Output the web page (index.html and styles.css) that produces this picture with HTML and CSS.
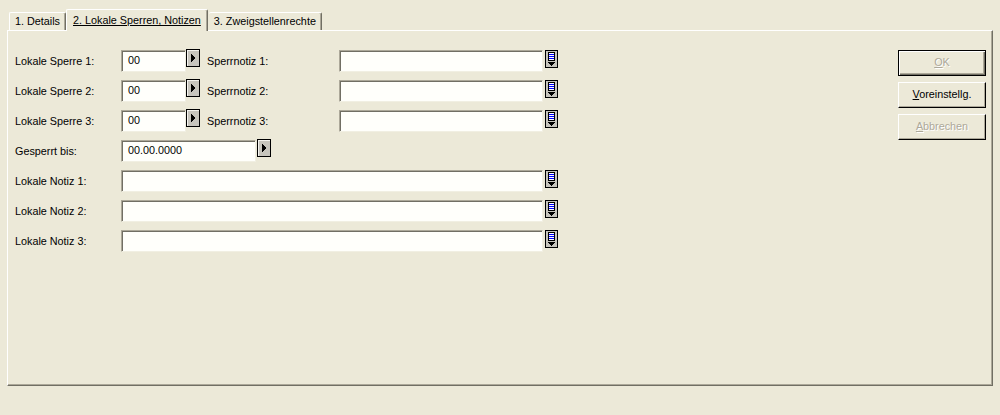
FILE: index.html
```html
<!DOCTYPE html>
<html lang="de">
<head>
    <meta charset="UTF-8">
    <title>Lokale Sperren, Notizen</title>
    <link rel="stylesheet" href="styles.css">
</head>
<body>
    <div class="window">
        <div class="tabs">
            <div class="tab">1. Details</div>
            <div class="tab active">2. Lokale Sperren, Notizen</div>
            <div class="tab">3. Zweigstellenrechte</div>
        </div>

        <div class="panel">
            <div class="form">
                <div class="row">
                    <span class="label">Lokale Sperre 1:</span>
                    <div class="field short">00</div>
                    <svg class="arrow-btn" width="14" height="18" viewBox="0 0 14 18" shape-rendering="crispEdges"><rect x="0.5" y="0.5" width="13" height="17" fill="#c7c5bd" stroke="#000"/><path d="M1 1h12v1H2v15H1z" fill="#f4f3ee"/><polygon points="5,5 9,9 5,13" fill="#000"/></svg>
                    <span class="label2">Sperrnotiz 1:</span>
                    <div class="field note"></div>
                    <svg class="list-btn" width="13" height="18" viewBox="0 0 13 18" shape-rendering="crispEdges"><rect x="0.5" y="0.5" width="12" height="17" fill="#c7c5bd" stroke="#000"/><rect x="3.5" y="2.5" width="6" height="8" fill="#fff" stroke="#000"/><path d="M4 4h5v1H4zM4 6h5v1H4zM4 8h5v1H4z" fill="#0000ff"/><path d="M3 12h7v1H3zM4 13h5v1H4zM5 14h3v1H5zM6 15h1v1H6z" fill="#000"/></svg>
                </div>
                <div class="row">
                    <span class="label">Lokale Sperre 2:</span>
                    <div class="field short">00</div>
                    <svg class="arrow-btn" width="14" height="18" viewBox="0 0 14 18" shape-rendering="crispEdges"><rect x="0.5" y="0.5" width="13" height="17" fill="#c7c5bd" stroke="#000"/><path d="M1 1h12v1H2v15H1z" fill="#f4f3ee"/><polygon points="5,5 9,9 5,13" fill="#000"/></svg>
                    <span class="label2">Sperrnotiz 2:</span>
                    <div class="field note"></div>
                    <svg class="list-btn" width="13" height="18" viewBox="0 0 13 18" shape-rendering="crispEdges"><rect x="0.5" y="0.5" width="12" height="17" fill="#c7c5bd" stroke="#000"/><rect x="3.5" y="2.5" width="6" height="8" fill="#fff" stroke="#000"/><path d="M4 4h5v1H4zM4 6h5v1H4zM4 8h5v1H4z" fill="#0000ff"/><path d="M3 12h7v1H3zM4 13h5v1H4zM5 14h3v1H5zM6 15h1v1H6z" fill="#000"/></svg>
                </div>
                <div class="row">
                    <span class="label">Lokale Sperre 3:</span>
                    <div class="field short">00</div>
                    <svg class="arrow-btn" width="14" height="18" viewBox="0 0 14 18" shape-rendering="crispEdges"><rect x="0.5" y="0.5" width="13" height="17" fill="#c7c5bd" stroke="#000"/><path d="M1 1h12v1H2v15H1z" fill="#f4f3ee"/><polygon points="5,5 9,9 5,13" fill="#000"/></svg>
                    <span class="label2">Sperrnotiz 3:</span>
                    <div class="field note"></div>
                    <svg class="list-btn" width="13" height="18" viewBox="0 0 13 18" shape-rendering="crispEdges"><rect x="0.5" y="0.5" width="12" height="17" fill="#c7c5bd" stroke="#000"/><rect x="3.5" y="2.5" width="6" height="8" fill="#fff" stroke="#000"/><path d="M4 4h5v1H4zM4 6h5v1H4zM4 8h5v1H4z" fill="#0000ff"/><path d="M3 12h7v1H3zM4 13h5v1H4zM5 14h3v1H5zM6 15h1v1H6z" fill="#000"/></svg>
                </div>
                <div class="row">
                    <span class="label">Gesperrt bis:</span>
                    <div class="field date">00.00.0000</div>
                    <svg class="arrow-btn gap1" width="14" height="18" viewBox="0 0 14 18" shape-rendering="crispEdges"><rect x="0.5" y="0.5" width="13" height="17" fill="#c7c5bd" stroke="#000"/><path d="M1 1h12v1H2v15H1z" fill="#f4f3ee"/><polygon points="5,5 9,9 5,13" fill="#000"/></svg>
                </div>
                <div class="row">
                    <span class="label">Lokale Notiz 1:</span>
                    <div class="field wide"></div>
                    <svg class="list-btn" width="13" height="18" viewBox="0 0 13 18" shape-rendering="crispEdges"><rect x="0.5" y="0.5" width="12" height="17" fill="#c7c5bd" stroke="#000"/><rect x="3.5" y="2.5" width="6" height="8" fill="#fff" stroke="#000"/><path d="M4 4h5v1H4zM4 6h5v1H4zM4 8h5v1H4z" fill="#0000ff"/><path d="M3 12h7v1H3zM4 13h5v1H4zM5 14h3v1H5zM6 15h1v1H6z" fill="#000"/></svg>
                </div>
                <div class="row">
                    <span class="label">Lokale Notiz 2:</span>
                    <div class="field wide"></div>
                    <svg class="list-btn" width="13" height="18" viewBox="0 0 13 18" shape-rendering="crispEdges"><rect x="0.5" y="0.5" width="12" height="17" fill="#c7c5bd" stroke="#000"/><rect x="3.5" y="2.5" width="6" height="8" fill="#fff" stroke="#000"/><path d="M4 4h5v1H4zM4 6h5v1H4zM4 8h5v1H4z" fill="#0000ff"/><path d="M3 12h7v1H3zM4 13h5v1H4zM5 14h3v1H5zM6 15h1v1H6z" fill="#000"/></svg>
                </div>
                <div class="row">
                    <span class="label">Lokale Notiz 3:</span>
                    <div class="field wide"></div>
                    <svg class="list-btn" width="13" height="18" viewBox="0 0 13 18" shape-rendering="crispEdges"><rect x="0.5" y="0.5" width="12" height="17" fill="#c7c5bd" stroke="#000"/><rect x="3.5" y="2.5" width="6" height="8" fill="#fff" stroke="#000"/><path d="M4 4h5v1H4zM4 6h5v1H4zM4 8h5v1H4z" fill="#0000ff"/><path d="M3 12h7v1H3zM4 13h5v1H4zM5 14h3v1H5zM6 15h1v1H6z" fill="#000"/></svg>
                </div>
            </div>

            <div class="buttons">
                <div class="btn default disabled"><u>O</u>K</div>
                <div class="btn"><u>V</u>oreinstellg.</div>
                <div class="btn disabled"><u>A</u>bbrechen</div>
            </div>
        </div>
    </div>
</body>
</html>
```

FILE: styles.css
```css
body {
    margin: 0;
    background: #ece9d8;
    font-family: "Liberation Sans", Arial, sans-serif;
    font-size: 10.8px;
    color: #000;
}
.window {
    padding: 9px 7px 0 7px;
}
.tabs {
    display: flex;
    align-items: flex-end;
    height: 21px;
    padding-left: 2px;
}
.tab {
    height: 17px;
    line-height: 17px;
    padding: 0 5px;
    border-top: 1px solid #fff;
    border-left: 1px solid #fff;
    border-right: 1px solid #716f64;
    box-shadow: inset -1px 0 #aca899;
    border-radius: 2px 2px 0 0;
    white-space: nowrap;
}
.tab.active {
    position: relative;
    z-index: 1;
    height: 21px;
    line-height: 20px;
    margin-bottom: -1px;
    padding: 0 6px;
    background: #ece9d8;
    text-decoration: underline;
}
.tab.active + .tab {
    border-left: none;
    margin-left: 1px;
}
.panel {
    box-sizing: border-box;
    height: 356px;
    display: flex;
    justify-content: space-between;
    align-items: flex-start;
    padding: 19px 6px 0 7px;
    border: 1px solid;
    border-color: #fff #716f64 #716f64 #fff;
    box-shadow: inset -1px -1px #aca899;
}
.form {
    display: flex;
    flex-direction: column;
    gap: 8px;
}
.row {
    display: flex;
    align-items: center;
    height: 22px;
}
.label {
    width: 106px;
    white-space: nowrap;
}
.label2 {
    width: 132px;
    margin-left: 7px;
    white-space: nowrap;
}
.field {
    box-sizing: border-box;
    height: 22px;
    line-height: 18px;
    padding-left: 6px;
    background: #fffffb;
    border: 1px solid;
    border-color: #aca899 #f1efe2 #f1efe2 #aca899;
    box-shadow: inset 1px 1px 0 #716f64;
}
.field.short {
    width: 65px;
}
.field.date {
    width: 135px;
}
.field.note {
    width: 204px;
}
.field.wide {
    width: 422px;
}
.arrow-btn {
    align-self: flex-start;
    margin-top: -1px;
}
.arrow-btn.gap1 {
    margin-left: 1px;
}
.list-btn {
    align-self: flex-start;
    margin-left: 2px;
}
.buttons {
    display: flex;
    flex-direction: column;
    gap: 6px;
}
.btn {
    box-sizing: border-box;
    width: 88px;
    height: 26px;
    line-height: 22px;
    text-align: center;
    border: 1px solid;
    border-color: #fff #000 #000 #fff;
    box-shadow: inset -1px -1px #aca899;
}
.btn.default {
    border-color: #000;
    box-shadow: inset 1px 1px #fff, inset -1px -1px #716f64, inset -2px -2px #aca899;
}
.btn.disabled {
    color: #aca899;
    text-shadow: 1px 1px #fff;
}
```
